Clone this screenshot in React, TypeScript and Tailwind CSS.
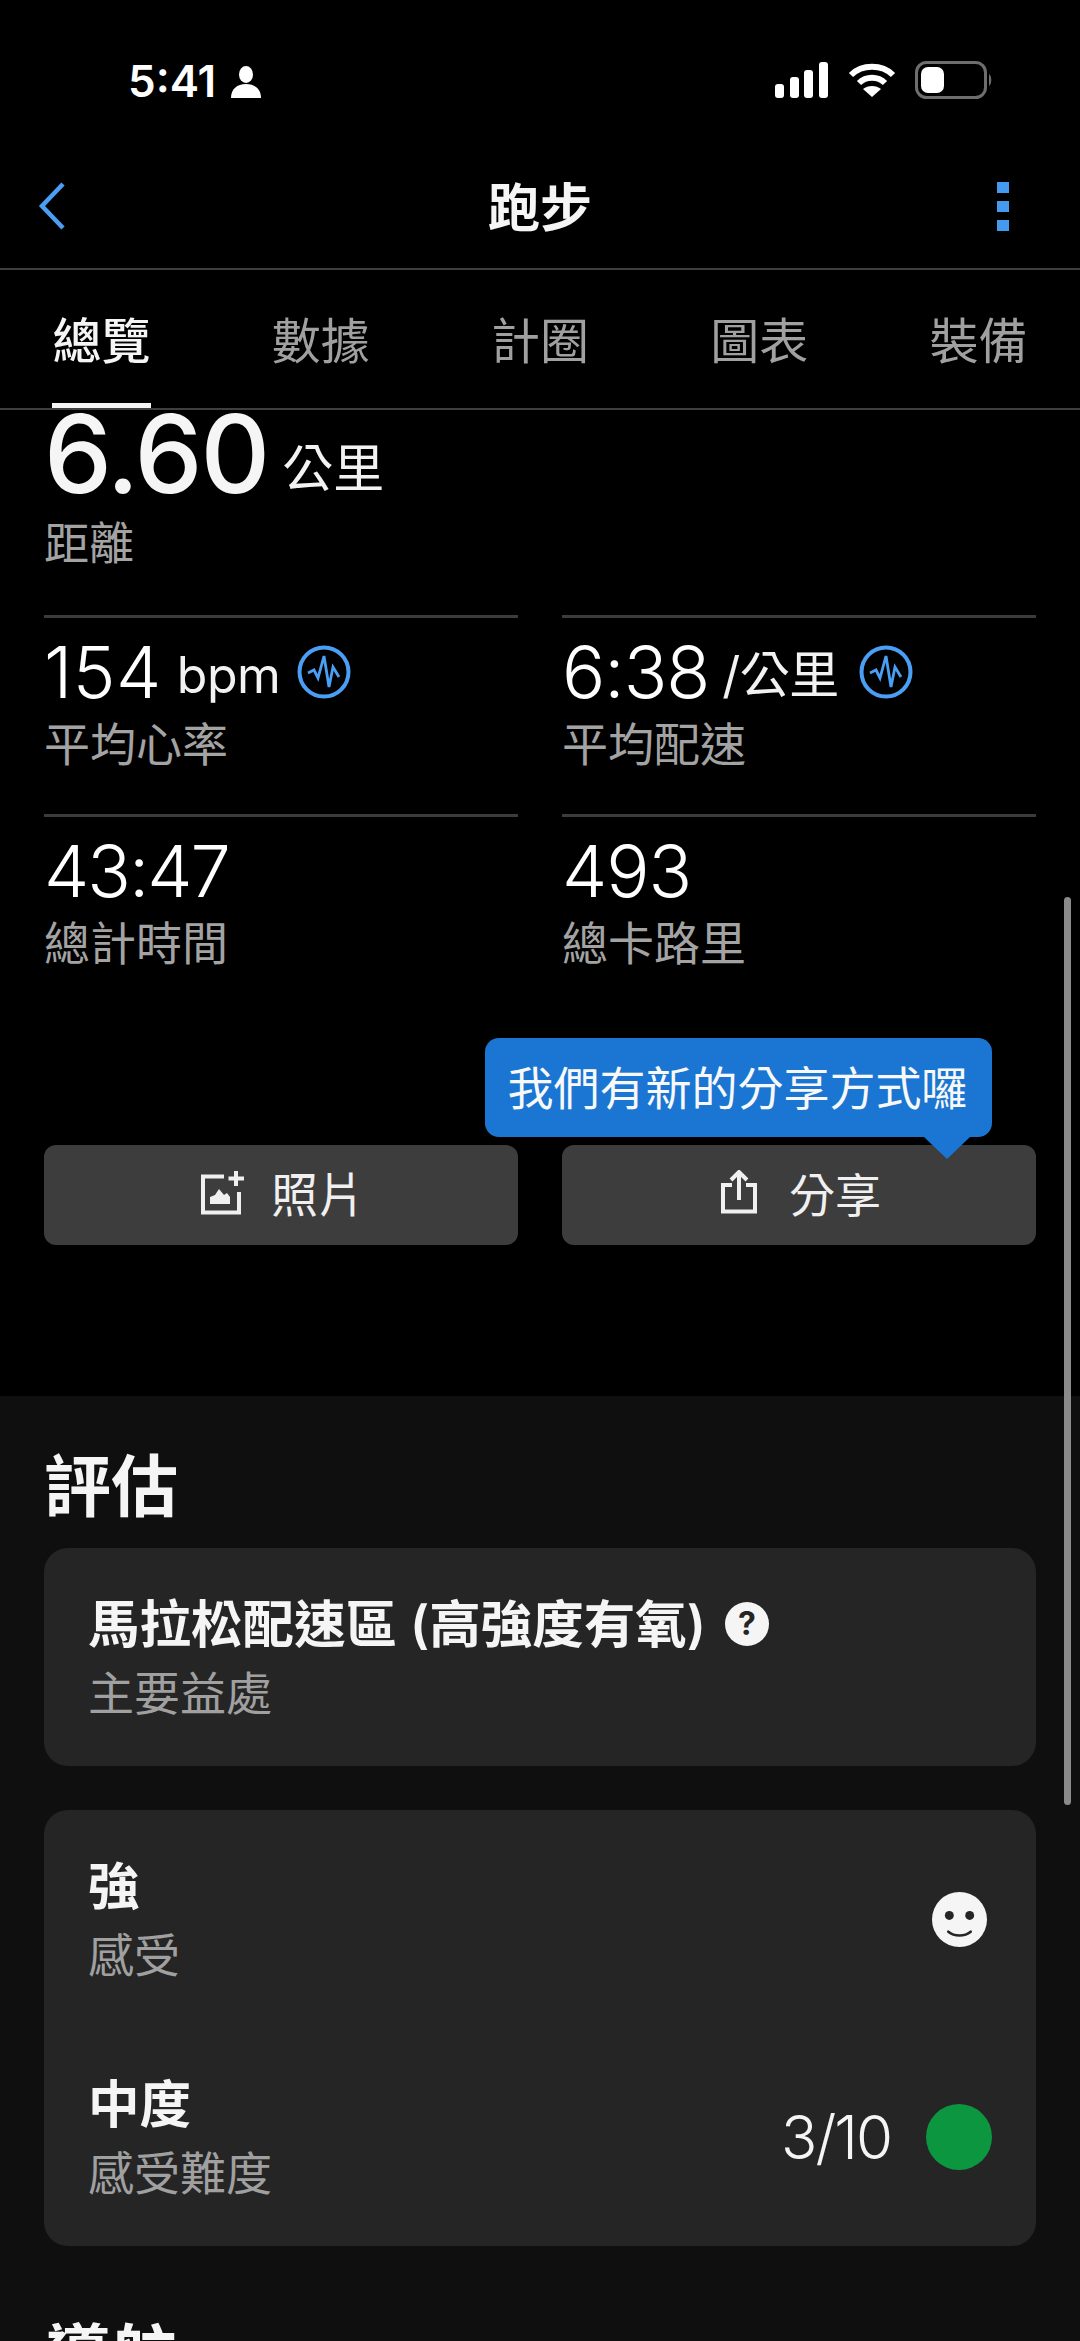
import React from "react";

const F = "font-['Inter','Noto_Sans_CJK_TC',sans-serif]";

function Pulse() {
  return (
    <svg width="54" height="54" viewBox="0 0 54 54" fill="none" className="shrink-0">
      <circle cx="27" cy="27" r="24.5" stroke="#4a9ff5" strokeWidth="4" />
      <path d="M11 28 L17 25 L21 33 L27 11 L32 42 L36 22 L42 32" stroke="#4a9ff5" strokeWidth="2.8" strokeLinejoin="miter" />
    </svg>
  );
}

function Stat({ value, unit, label, icon, valueClass, unitClass, iconClass }: { value: string; unit?: string; label: string; icon?: boolean; valueClass: string; unitClass?: string; iconClass?: string }) {
  return (
    <div className="h-[199px] border-t-[3px] border-[#3c3c3c] pt-[18px]">
      <div className="flex h-[72px] items-center">
        <span className={`text-[72px] font-light leading-[72px] text-white ${valueClass}`}>{value}</span>
        {unit && <span className={`mt-[6px] text-[50px] font-normal leading-[60px] tracking-[-0.5px] text-[#f2f2f2] ${unitClass ?? ""}`}>{unit}</span>}
        {icon && <span className={`flex ${iconClass ?? ""}`}><Pulse /></span>}
      </div>
      <div className="mt-[8px] text-[46px] leading-[56px] text-[#a3a3a3]">{label}</div>
    </div>
  );
}

function Row({ title, sub, right }: { title: React.ReactNode; sub: string; right?: React.ReactNode }) {
  return (
    <div className="flex h-[218px] items-center justify-between pl-[44px] pr-[44px]">
      <div className="self-start pt-[46px]">
        <div className="flex h-[60px] items-center text-[51.5px] font-semibold leading-[60px] text-[#f5f5f5]">{title}</div>
        <div className="mt-[11px] text-[46px] leading-[56px] text-[#a0a0a0]">{sub}</div>
      </div>
      {right}
    </div>
  );
}

const tabs = ["總覽", "數據", "計圈", "圖表", "裝備"];

export default function App() {
  return (
    <div className={`relative h-[2341px] w-[1080px] overflow-hidden bg-black ${F}`}>
      {/* status bar */}
      <div className="flex h-[120px] items-start justify-between pl-[128px] pr-[87px] pt-[58px]">
        <div className="flex items-center">
          <span className="text-[44px] font-semibold leading-[46px] text-white">5:41</span>
          <svg width="30" height="32" viewBox="0 0 30 32" className="ml-[15px] mt-[2px]" fill="#fff">
            <ellipse cx="15" cy="8.5" rx="7" ry="8.5" />
            <path d="M0 32 C0 23 6 18 15 18 C24 18 30 23 30 32 Z" />
          </svg>
        </div>
        <div className="mt-[3px] flex items-center">
          <svg width="53" height="36" viewBox="0 0 53 36" fill="#fff">
            <rect x="0" y="22" width="9" height="14" rx="3" />
            <rect x="15" y="15" width="9" height="21" rx="3" />
            <rect x="29" y="8" width="9" height="28" rx="3" />
            <rect x="44" y="0" width="9" height="36" rx="3" />
          </svg>
          <svg width="48" height="36" viewBox="0 0 48 36" className="ml-[20px]" fill="none" stroke="#fff" strokeWidth="6">
            <path d="M3 13 C14 2 34 2 45 13" />
            <path d="M11 21 C18 14 30 14 37 21" />
            <path d="M24 35 L15 27 C20 23 28 23 33 27 Z" fill="#fff" stroke="none" />
          </svg>
          <svg width="78" height="38" viewBox="0 0 78 38" className="ml-[19px]" fill="none">
            <rect x="1.5" y="1.5" width="69" height="35" rx="10" stroke="#6e6e6e" strokeWidth="3" />
            <rect x="6" y="6" width="23" height="26" rx="7" fill="#fff" />
            <path d="M74 13 C77 15 77 23 74 25 Z" fill="#6e6e6e" />
          </svg>
        </div>
      </div>

      {/* nav bar */}
      <div className="grid h-[150px] grid-cols-[1fr_auto_1fr] items-center border-b-2 border-[#3f3f3f] px-[38px] pt-[24px]">
        <svg width="28" height="48" viewBox="0 0 28 48" fill="none" stroke="#4a9ff5" strokeWidth="4.5">
          <path d="M25 2 L4 24 L25 46" />
        </svg>
        <div className="pt-[5px] text-[52px] font-semibold leading-[60px] text-[#f5f5f5]">跑步</div>
        <div className="mr-[33px] flex flex-col items-end gap-[8px]">
          <span className="h-[11px] w-[12px] bg-[#459af0]" />
          <span className="h-[11px] w-[12px] bg-[#459af0]" />
          <span className="h-[11px] w-[12px] bg-[#459af0]" />
        </div>
      </div>

      {/* tabs */}
      <div className="flex h-[140px] justify-between border-b-2 border-[#3f3f3f] px-[52px]">
        {tabs.map((t, i) => (
          <div key={t} className={`relative flex h-full w-[99px] items-center justify-center whitespace-nowrap pt-[5px] text-[49px] leading-[60px] ${i === 0 ? "font-medium text-[#f5f5f5]" : "text-[#a0a0a0]"}`}>
            {t}
            {i === 0 && <span className="absolute bottom-0 left-0 h-[5px] w-[99px] bg-[#f5f5f5]" />}
          </div>
        ))}
      </div>

      {/* summary */}
      <div className="h-[986px] px-[44px]">
        <div className="flex h-[84px] items-center pt-[4px]">
          <span className="text-[108px] font-medium leading-[84px] tracking-[-2px] text-[#f5f5f5]">6.60</span>
          <span className="ml-[14px] mt-[30px] text-[51px] leading-[60px] text-[#f2f2f2]">公里</span>
        </div>
        <div className="mt-[22px] h-[99px] text-[45px] leading-[56px] text-[#a3a3a3]">距離</div>

        <div className="grid grid-cols-2 gap-x-[44px]">
          <Stat value="154" unit="bpm" label="平均心率" icon valueClass="tracking-[0.5px]" unitClass="ml-[15px]" iconClass="ml-[17px]" />
          <Stat value="6:38" unit="/公里" label="平均配速" icon valueClass="tracking-[-1px]" unitClass="ml-[13px]" iconClass="ml-[20px]" />
          <Stat value="43:47" label="總計時間" valueClass="tracking-[-2px]" />
          <Stat value="493" label="總卡路里" valueClass="tracking-[-1px]" />
        </div>

        <div className="mt-[132px] grid grid-cols-2 gap-x-[44px]">
          <button className="flex h-[100px] items-center justify-center rounded-[12px] bg-[#3d3d3d] pl-[4px] text-[47px] text-[#f0f0f0]">
            <svg width="44" height="44" viewBox="0 0 44 44" fill="none" className="mb-[4px] mr-[26px]">
              <path d="M23 5.5 H2 V41.5 H38 V21" stroke="#f0f0f0" strokeWidth="4" />
              <path d="M35 0 V15 M27.5 7.5 H43" stroke="#f0f0f0" strokeWidth="4" />
              <path d="M9 33 V26 L14 24 L18 18 L23 24 L26 22 L29 26 V33 Z" fill="#f0f0f0" />
            </svg>
            照片
          </button>
          <div className="relative">
            <button className="flex h-[100px] w-full items-center justify-center rounded-[12px] bg-[#3d3d3d] pl-[4px] text-[46px] text-[#f0f0f0]">
              <svg width="36" height="44" viewBox="0 0 36 44" fill="none" className="mb-[6px] mr-[32px]">
                <path d="M11 15 H2 V41.5 H34 V15 H25" stroke="#f0f0f0" strokeWidth="4" />
                <path d="M18 30 V3 M10 10 L18 2 L26 10" stroke="#f0f0f0" strokeWidth="4" />
              </svg>
              分享
            </button>
            <div className="absolute left-[-77px] top-[-107px] flex h-[99px] w-[507px] items-center justify-center whitespace-nowrap rounded-[14px] bg-[#1a76d2] pr-[2px] text-[46px] leading-[60px] text-[#f8f8f8]">
              我們有新的分享方式囉
            </div>
            <svg width="46" height="22" viewBox="0 0 46 22" fill="#1a76d2" className="absolute left-[362px] top-[-8px]">
              <path d="M0 0 H46 L23 22 Z" />
            </svg>
          </div>
        </div>
      </div>

      {/* evaluation section */}
      <div className="h-[945px] bg-[#0f0f0f] px-[44px] pt-[51px]">
        <div className="text-[67px] font-semibold leading-[80px] text-[#f5f5f5]">評估</div>
        <div className="mt-[21px] rounded-[24px] bg-[#252525]">
          <Row
            title={
              <>
                馬拉松配速區 (高強度有氧)
                <span className="ml-[19px] flex h-[44px] w-[44px] items-center justify-center rounded-full bg-[#f5f5f5] text-[32px] font-bold leading-none text-[#252525]">?</span>
              </>
            }
            sub="主要益處"
          />
        </div>
        <div className="mt-[44px] rounded-[24px] bg-[#252525]">
          <Row
            title="強"
            sub="感受"
            right={
              <span className="flex w-[66px] justify-center">
                <svg width="55" height="55" viewBox="0 0 54 54">
                  <circle cx="27" cy="27" r="27" fill="#f5f5f5" />
                  <circle cx="17" cy="23" r="4.4" fill="#252525" />
                  <circle cx="37" cy="23" r="4.4" fill="#252525" />
                  <path d="M16 39 C22 44 32 44 38 39" stroke="#252525" strokeWidth="2.6" fill="none" strokeLinecap="round" />
                </svg>
              </span>
            }
          />
          <Row
            title="中度"
            sub="感受難度"
            right={
              <div className="flex items-center">
                <span className="mr-[35px] text-[60px] font-light leading-[70px] tracking-[-2px] text-[#f5f5f5]">3/10</span>
                <span className="h-[66px] w-[66px] rounded-full bg-[#0d9640]" />
              </div>
            }
          />
        </div>
        <div className="mt-[70px] text-[67px] font-semibold leading-[80px] text-[#f5f5f5]">導航</div>
      </div>

      {/* scrollbar */}
      <div className="absolute left-[1064px] top-[897px] h-[908px] w-[7px] rounded-full bg-[#8a8a8a]" />
    </div>
  );
}
